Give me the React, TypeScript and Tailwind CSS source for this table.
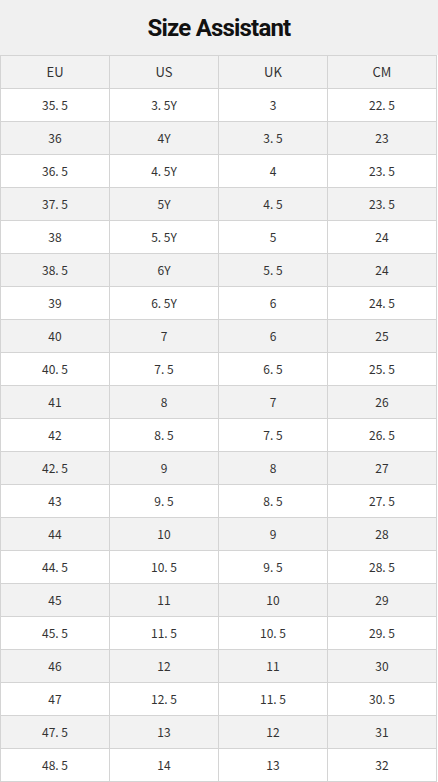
const rows: [string, string, string, string][] = [
  ["35. 5", "3. 5Y", "3", "22. 5"],
  ["36", "4Y", "3. 5", "23"],
  ["36. 5", "4. 5Y", "4", "23. 5"],
  ["37. 5", "5Y", "4. 5", "23. 5"],
  ["38", "5. 5Y", "5", "24"],
  ["38. 5", "6Y", "5. 5", "24"],
  ["39", "6. 5Y", "6", "24. 5"],
  ["40", "7", "6", "25"],
  ["40. 5", "7. 5", "6. 5", "25. 5"],
  ["41", "8", "7", "26"],
  ["42", "8. 5", "7. 5", "26. 5"],
  ["42. 5", "9", "8", "27"],
  ["43", "9. 5", "8. 5", "27. 5"],
  ["44", "10", "9", "28"],
  ["44. 5", "10. 5", "9. 5", "28. 5"],
  ["45", "11", "10", "29"],
  ["45. 5", "11. 5", "10. 5", "29. 5"],
  ["46", "12", "11", "30"],
  ["47", "12. 5", "11. 5", "30. 5"],
  ["47. 5", "13", "12", "31"],
  ["48. 5", "14", "13", "32"],
];

const headers = ["EU", "US", "UK", "CM"];

export default function App() {
  return (
    <div className="w-[438px] bg-white">
      <div className="h-[55px] bg-[#f0f0f0] flex items-center justify-center">
        <h1 className="font-['Roboto',sans-serif] font-bold text-[24px] tracking-[-0.8px] text-[#111]">
          Size Assistant
        </h1>
      </div>
      <div className="w-[437px] border-l border-t border-[#d4d4d4] font-['Noto_Sans_CJK_SC','Liberation_Sans',sans-serif] text-[#333]">
        <div className="grid grid-cols-4 h-[33px] bg-[#f2f2f2] border-b border-[#d4d4d4] text-[13px]">
          {headers.map((h) => (
            <div key={h} className="flex items-center justify-center border-r border-[#d4d4d4]">
              {h}
            </div>
          ))}
        </div>
        {rows.map((r, i) => (
          <div
            key={i}
            className={`grid grid-cols-4 h-[33px] border-b border-[#d4d4d4] text-[12px] ${i % 2 === 1 ? "bg-[#f2f2f2]" : "bg-white"}`}
          >
            {r.map((c, j) => (
              <div key={j} className="flex items-center justify-center border-r border-[#d4d4d4]">
                {c}
              </div>
            ))}
          </div>
        ))}
      </div>
    </div>
  );
}
